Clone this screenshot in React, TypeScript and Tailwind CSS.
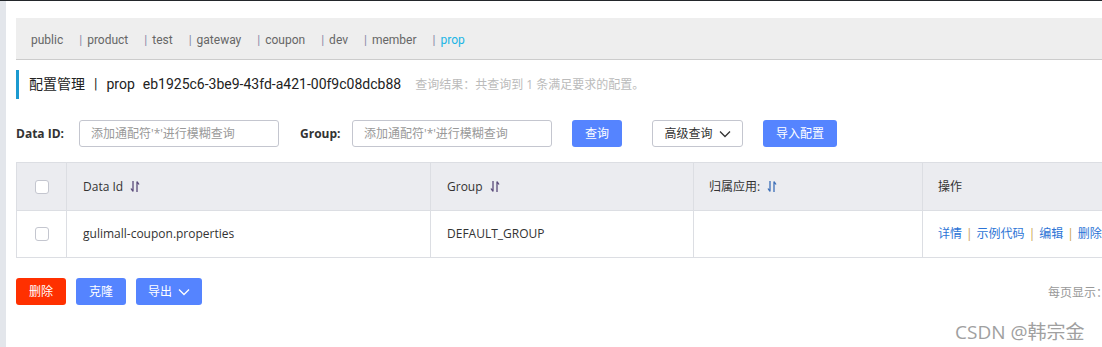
import React from "react";

const font = { fontFamily: '"Open Sans", "Noto Sans CJK SC", sans-serif' };
const titleFont = { fontFamily: 'Roboto, "Noto Sans CJK SC", sans-serif' };

const namespaces = ["public", "product", "test", "gateway", "coupon", "dev", "member", "prop"];

const SortIcon = ({ color = "#5a4b7a" }: { color?: string }) => (
  <svg width="10" height="13" viewBox="0 0 10 13" className="inline-block ml-[7px]">
    {/* down arrow with half head */}
    <path d="M3 1 V11.5 M3 11.5 L1 8.5" stroke={color} strokeWidth="1.3" fill="none" />
    {/* up arrow with half head */}
    <path d="M7 12 V1.5 M7 1.5 L9 4.5" stroke={color} strokeWidth="1.3" fill="none" />
  </svg>
);

const Chevron = ({ color }: { color: string }) => (
  <svg width="12" height="8" viewBox="0 0 12 8" className="inline-block ml-[6px]">
    <path d="M1 1.5 L6 6.5 L11 1.5" stroke={color} strokeWidth="1.3" fill="none" />
  </svg>
);

const Checkbox = () => (
  <div className="w-[14px] h-[14px] rounded-[3px] border border-[#c4c6cf] bg-white" />
);

export default function App() {
  return (
    <div
      className="relative w-[1102px] h-[347px] overflow-hidden bg-white flex border-t border-[#23272b] text-[#333]"
      style={font}
    >
      <div className="w-[6px] shrink-0 bg-[#e3e6eb]" />
      <div className="flex-1 pl-[10px] pt-[17px] min-w-0">
        {/* namespace tabs */}
        <div
          className="h-[42px] bg-[#eeeeee] border-b border-[#cccccc] flex items-center pt-[3px] pl-[15px] gap-[16px] text-[12px] text-[#666]"
          style={titleFont}
        >
          {namespaces.map((n, i) => (
            <span key={n} className="whitespace-nowrap">
              {i > 0 && <span className="text-[#8a8aa8] mr-[5px]">|</span>}
              <span className={n === "prop" ? "text-[#20b5e5]" : ""}>{n}</span>
            </span>
          ))}
        </div>

        {/* title */}
        <div
          className="mt-[10px] h-[29px] border-l-[3px] border-[#1b9ad0] pl-[10px] flex items-center whitespace-nowrap text-[14px] text-[#222]"
          style={titleFont}
        >
          <span>配置管理</span>
          <span className="mx-[9px]">|</span>
          <span>prop</span>
          <span className="ml-[8px]">eb1925c6-3be9-43fd-a421-00f9c08dcb88</span>
          <span className="text-[12px] text-[#bbbbbb] ml-[14px]" style={font}>
            查询结果：共查询到 1 条满足要求的配置。
          </span>
        </div>

        {/* search row */}
        <div className="mt-[21px] flex items-center h-[27px] text-[12px]">
          <span className="font-bold text-[#333] w-[63px]">Data ID:</span>
          <div className="w-[200px] h-[27px] border border-[#c4c6cf] rounded-[3px] flex items-center px-[11px] text-[#999]">
            添加通配符'*'进行模糊查询
          </div>
          <span className="font-bold text-[#333] ml-[21px] w-[52px]">Group:</span>
          <div className="w-[200px] h-[27px] border border-[#c4c6cf] rounded-[3px] flex items-center px-[11px] text-[#999]">
            添加通配符'*'进行模糊查询
          </div>
          <button className="ml-[20px] w-[50px] h-[27px] rounded-[3px] bg-[#5584ff] text-white">查询</button>
          <button className="ml-[30px] w-[91px] h-[27px] rounded-[3px] border border-[#c4c6cf] bg-white text-[#333] flex items-center justify-center">
            高级查询
            <Chevron color="#333" />
          </button>
          <button className="ml-[20px] w-[74px] h-[27px] rounded-[3px] bg-[#5584ff] text-white">导入配置</button>
        </div>

        {/* table */}
        <div className="mt-[15px] w-[1160px] border border-[#dcdee3] text-[12px]">
          <div className="flex h-[48px] bg-[#ebecf0] border-b border-[#dcdee3]">
            <div className="w-[50px] shrink-0 flex items-center justify-center border-r border-[#dcdee3]">
              <Checkbox />
            </div>
            <div className="w-[364px] shrink-0 flex items-center pl-[16px] border-r border-[#dcdee3]">
              Data Id
              <SortIcon />
            </div>
            <div className="w-[263px] shrink-0 flex items-center pl-[16px] border-r border-[#dcdee3]">
              Group
              <SortIcon />
            </div>
            <div className="w-[229px] shrink-0 flex items-center pl-[15px] border-r border-[#dcdee3]">
              归属应用:
              <SortIcon color="#3c6fb8" />
            </div>
            <div className="flex-1 flex items-center pl-[15px]">操作</div>
          </div>
          <div className="flex h-[46px]">
            <div className="w-[50px] shrink-0 flex items-center justify-center border-r border-[#dcdee3]">
              <Checkbox />
            </div>
            <div className="w-[364px] shrink-0 flex items-center pl-[16px] border-r border-[#dcdee3]">
              gulimall-coupon.properties
            </div>
            <div className="w-[263px] shrink-0 flex items-center pl-[16px] border-r border-[#dcdee3]">
              DEFAULT_GROUP
            </div>
            <div className="w-[229px] shrink-0 border-r border-[#dcdee3]" />
            <div className="flex-1 flex items-center pl-[15px] text-[#2c74d6] whitespace-nowrap">
              详情<span className="text-[#c9a04a] mx-[4px]">|</span>示例代码
              <span className="text-[#c9a04a] mx-[4px]">|</span>编辑
              <span className="text-[#c9a04a] mx-[4px]">|</span>删除
            </div>
          </div>
        </div>

        {/* bottom actions */}
        <div className="mt-[20px] flex items-center h-[27px] text-[12px]">
          <button className="w-[50px] h-[27px] rounded-[3px] bg-[#ff3000] text-white">删除</button>
          <button className="ml-[10px] w-[50px] h-[27px] rounded-[3px] bg-[#5584ff] text-white">克隆</button>
          <button className="ml-[10px] w-[66px] h-[27px] rounded-[3px] bg-[#5584ff] text-white flex items-center justify-center">
            导出
            <Chevron color="#ffffff" />
          </button>
          <span className="ml-auto text-[#999] whitespace-nowrap mr-[-6px] mt-[2px]">每页显示：</span>
        </div>
      </div>

      {/* watermark */}
      <div className="absolute left-[955px] top-[317px] text-[19px] text-[#a0a0a0] whitespace-nowrap">
        CSDN @韩宗金
      </div>
    </div>
  );
}
